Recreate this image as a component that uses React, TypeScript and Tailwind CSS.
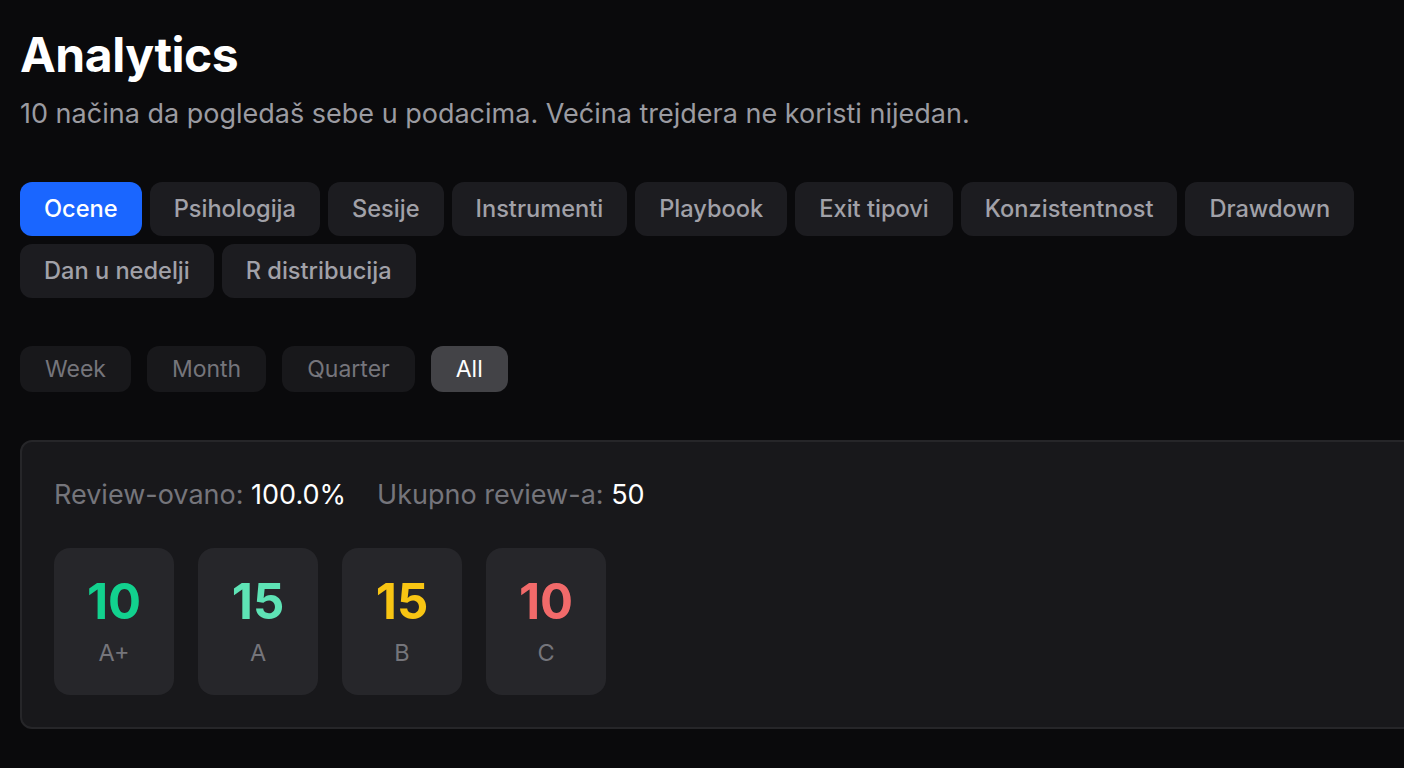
import React, { useState } from "react";

const tabs = [
  "Ocene",
  "Psihologija",
  "Sesije",
  "Instrumenti",
  "Playbook",
  "Exit tipovi",
  "Konzistentnost",
  "Drawdown",
  "Dan u nedelji",
  "R distribucija",
];

const periods = ["Week", "Month", "Quarter", "All"];

const grades = [
  { value: 10, label: "A+", color: "text-[#12d18e]" },
  { value: 15, label: "A", color: "text-[#5ee3b5]" },
  { value: 15, label: "B", color: "text-[#f8c513]" },
  { value: 10, label: "C", color: "text-[#f26a6a]" },
];

export default function App() {
  const [tab, setTab] = useState("Ocene");
  const [period, setPeriod] = useState("All");

  return (
    <div className="min-h-screen w-full overflow-hidden bg-[#0a0a0c] font-['Inter',sans-serif] text-white">
      <div className="px-5 pt-[26px]">
        <h1 className="text-[48px] font-bold leading-[58px] tracking-[-0.01em]">Analytics</h1>
        <p className="mt-[13px] text-[27px] leading-[34px] text-[#9b9ba1]">
          10 načina da pogledaš sebe u podacima. Većina trejdera ne koristi nijedan.
        </p>

        {/* Tabs */}
        <div className="mt-[51px] flex max-w-[1364px] flex-wrap gap-2">
          {tabs.map((t) => (
            <button
              key={t}
              onClick={() => setTab(t)}
              className={`h-[54px] rounded-xl px-6 text-[23.6px] font-medium ${
                t === tab ? "bg-[#1a66ff] text-white" : "bg-[#1c1c20] text-[#a1a1a8]"
              }`}
            >
              {t}
            </button>
          ))}
        </div>

        {/* Period */}
        <div className="mt-12 flex gap-4">
          {periods.map((p) => (
            <button
              key={p}
              onClick={() => setPeriod(p)}
              className={`h-[46px] rounded-xl px-[25px] text-[23px] ${
                p === period ? "bg-[#434347] text-white" : "bg-[#18181b] text-[#75757b]"
              }`}
            >
              {p}
            </button>
          ))}
        </div>

        {/* Card */}
        <div className="mt-12 w-[1420px] rounded-xl border-2 border-[#262629] bg-[#18181b] px-8 pb-8 pt-[38px]">
          <div className="flex gap-[31px] text-[27px] leading-[30px] text-[#75757b]">
            <span>
              Review-ovano: <span className="text-white">100.0%</span>
            </span>
            <span>
              Ukupno review-a: <span className="text-white">50</span>
            </span>
          </div>
          <div className="mt-[38px] flex gap-6">
            {grades.map((g) => (
              <div
                key={g.label}
                className="flex h-[147px] w-[120px] flex-col items-center rounded-2xl bg-[#26262a] pt-[26px]"
              >
                <span className={`text-[49px] font-bold leading-[56px] ${g.color}`}>{g.value}</span>
                <span className="mt-[8px] text-[23.5px] leading-[30px] text-[#75757b]">{g.label}</span>
              </div>
            ))}
          </div>
        </div>
      </div>
    </div>
  );
}
